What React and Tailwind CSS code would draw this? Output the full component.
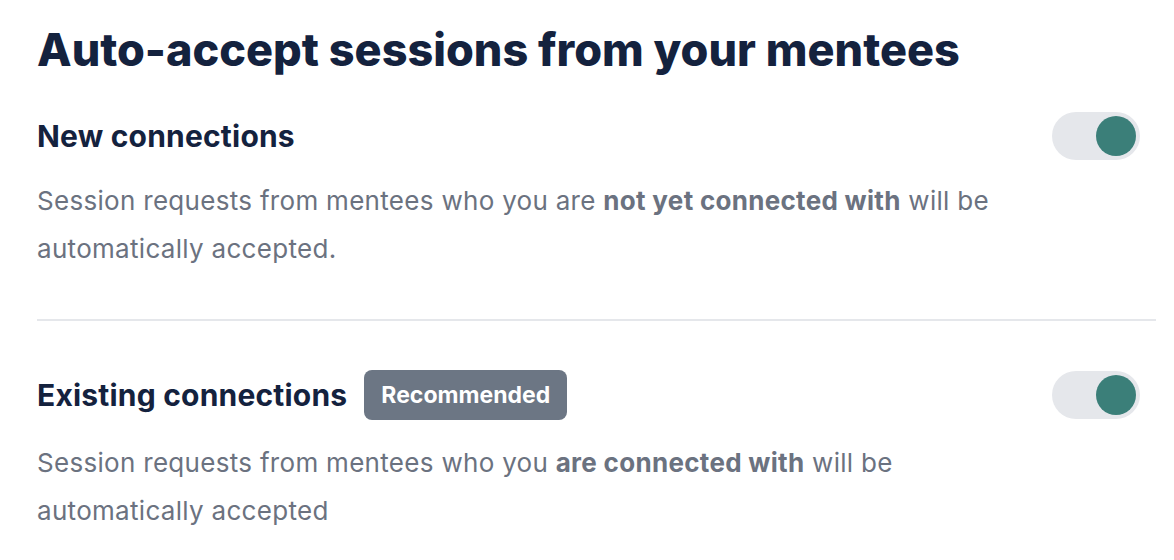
import React from 'react';

const Toggle = () => (
  <div className="flex h-[48px] w-[88px] shrink-0 items-center justify-end rounded-full bg-[#e5e7eb] px-[4px]">
    <div className="h-[40px] w-[40px] rounded-full bg-[#3b7f79]" />
  </div>
);

const Setting = ({ title, badge, children, gap }) => (
  <div>
    <div className="flex items-center justify-between">
      <div className="flex items-center gap-[17px]">
        <h2 className="text-[30px] font-bold leading-[52px] tracking-[0.2px] text-[#14223e]">{title}</h2>
        {badge && (
          <span className="rounded-[8px] bg-[#6c7684] px-[17px] py-[9px] text-[23px] font-bold leading-[32px] text-white">
            {badge}
          </span>
        )}
      </div>
      <Toggle />
    </div>
    <p className={`${gap} max-w-[990px] text-[26px] leading-[48px] tracking-[0.3px] text-[#6b7280]`}>{children}</p>
  </div>
);

export default function App() {
  return (
    <div className="min-h-[560px] bg-white pl-[37px] pr-[34px] pt-[20px]" style={{ fontFamily: 'Inter, "Noto Sans", sans-serif' }}>
      <h1 className="text-[45px] font-extrabold leading-[60px] text-[#14223e]">Auto-accept sessions from your mentees</h1>
      <div className="mt-[30px]">
        <Setting title="New connections" gap="mt-[15px]">
          Session requests from mentees who you are <b className="font-bold">not yet connected with</b> will be automatically accepted.
        </Setting>
      </div>
      <div className="mt-[46px] mr-[-16px] h-[2px] bg-[#e5e7eb]" />
      <div className="mt-[48px]">
        <Setting title="Existing connections" badge="Recommended" gap="mt-[18px]">
          Session requests from mentees who you <b className="font-bold">are connected with</b> will be automatically accepted
        </Setting>
      </div>
    </div>
  );
}
